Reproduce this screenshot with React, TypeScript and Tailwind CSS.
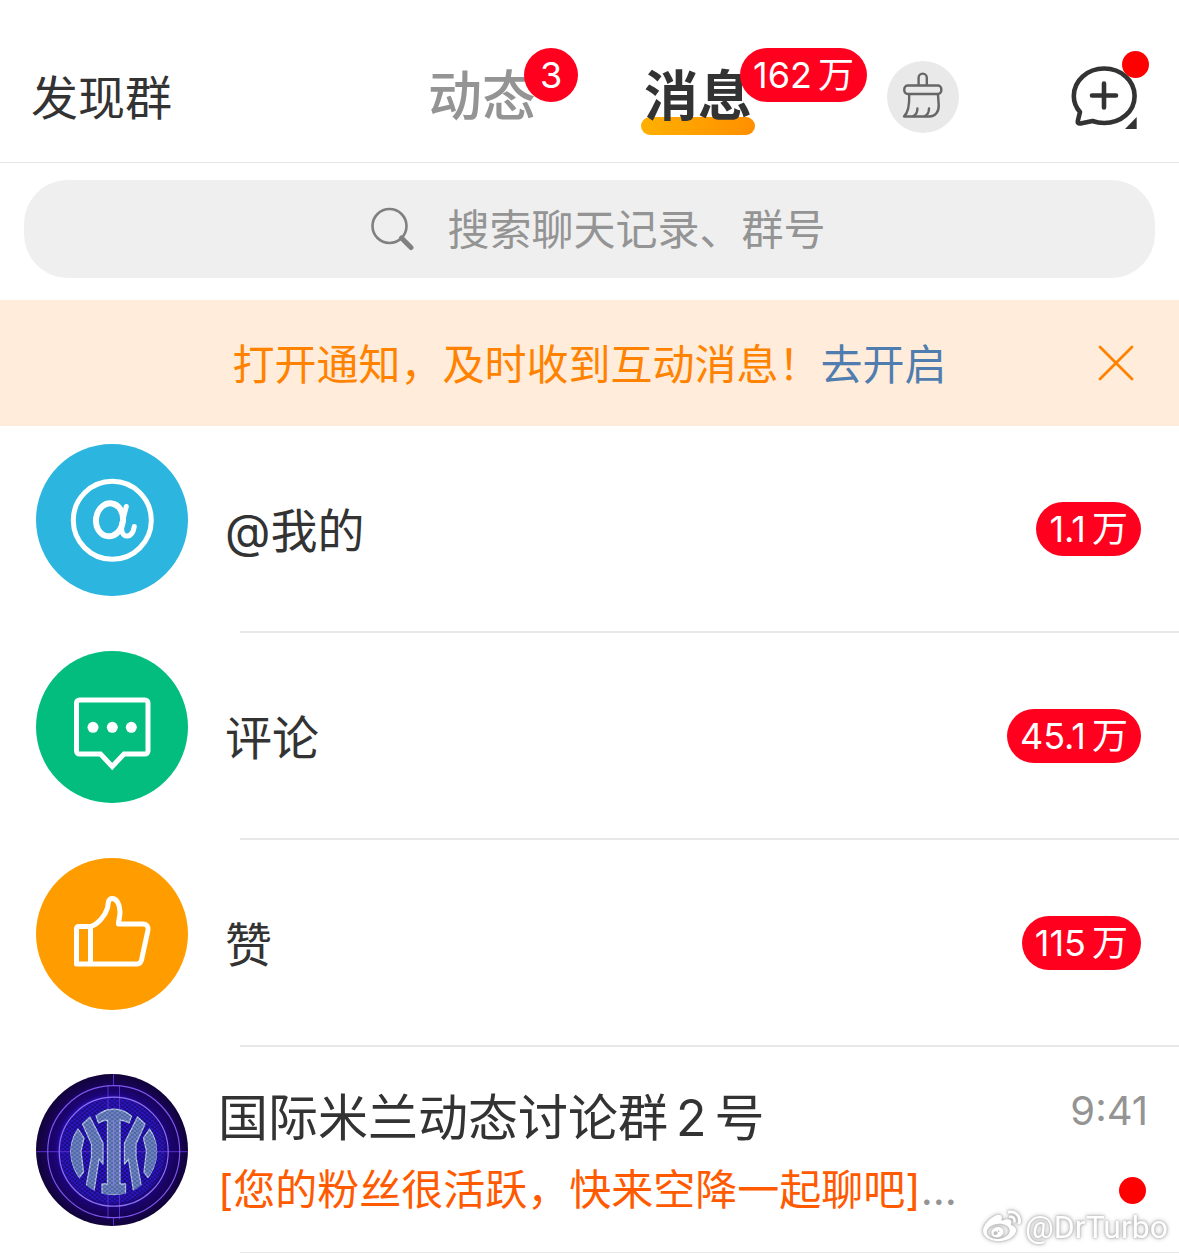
import { ReactNode, useState } from 'react'
import { FaWeibo } from 'react-icons/fa'

type Category = { id: string; label: string; count: string; icon: ReactNode }

const BrushIcon = () => (
  <svg viewBox="0 0 72 72" className="size-full" fill="none" stroke="#666" strokeWidth="2.4" strokeLinecap="round" strokeLinejoin="round">
    <path d="M31.600 23.500V16.700a4 4 0 0 1 8.200 0v6.800" />
    <rect x="17.300" y="24.500" width="37" height="8.500" rx="3.500" />
    <path d="M22.200 33.500C22.500 43 22 51 17 55.500H42C49 55.500 52 50 51.700 44L51 33.500" />
    <path d="M30.400 47.500c0 3-1.200 6-4 7.600M42 47.500c0 3-1.200 6-4 7.600" />
  </svg>
)

const NewChatIcon = () => (
  <svg viewBox="0 0 68 64" className="w-[68px] h-16" fill="none" stroke="#333" strokeWidth="4.6" strokeLinecap="round" strokeLinejoin="round">
    <path d="M10 47C6 42.500 3.800 37 3.800 31C3.800 15.500 17.400 3.500 34.200 3.500S64.600 15.500 64.600 31S51 58 34.200 58C30 58 26 57.300 22.500 56L10.500 58.500C8.200 58.800 7.400 57.700 7.800 56Z" />
    <path d="M34 18.500V42.500M22 30.500H46" />
    <path d="M66.700 52V64H55Z" fill="#333" stroke="none" />
  </svg>
)

const SearchIcon = () => (
  <svg viewBox="0 0 44 44" className="size-11" fill="none" stroke="#808080" strokeLinecap="round">
    <circle cx="19.500" cy="19" r="17" strokeWidth="2.600" />
    <path d="M31.500 31L41 40.500" strokeWidth="5" />
  </svg>
)

const AtIcon = () => (
  <svg viewBox="0 0 152 152" className="size-full" fill="none" stroke="#fff" strokeWidth="5" strokeLinecap="round">
    <circle cx="76.300" cy="76.300" r="39" />
    <ellipse cx="73.500" cy="75.800" rx="13.500" ry="16.500" strokeWidth="6" transform="rotate(8 73.500 75.800)" />
    <path d="M90.300 62.500L86 79C84.500 88 87 92.500 91.500 92C95.500 91.500 97.500 87.500 98.300 82.500" />
  </svg>
)

const CommentIcon = () => (
  <svg viewBox="0 0 152 152" className="size-full" fill="none" stroke="#fff" strokeWidth="5">
    <path d="M43.500 49H109a3 3 0 0 1 3 3V100a3 3 0 0 1-3 3H88L76.200 115.500L64.500 103H43.500a3 3 0 0 1-3-3V52a3 3 0 0 1 3-3Z" />
    <g fill="#fff" stroke="none">
      <circle cx="57" cy="76.300" r="5.500" />
      <circle cx="76.300" cy="76.300" r="5.500" />
      <circle cx="95.300" cy="76.300" r="5.500" />
    </g>
  </svg>
)

const LikeIcon = () => (
  <svg viewBox="0 0 152 152" className="size-full" fill="none" stroke="#fff" strokeWidth="5" strokeLinejoin="round">
    <path d="M40.500 106V70.500a2 2 0 0 1 2-2H55C62 66 69 58 71.500 50C72.200 46 72 40.500 76 40.500C81 40.500 84 47 84 54C84 59 82.500 62 82.500 66H107C111 66 112.500 69 112 72L105.500 102C104.800 104.800 103.500 106 101 106Z" />
    <path d="M54.500 69V106" />
  </svg>
)

const GroupCrest = () => (
  <svg viewBox="0 0 152 152" className="size-full">
    <defs>
      <radialGradient id="crestBg">
        <stop offset="0" stopColor="#2f14d0" />
        <stop offset="0.68" stopColor="#2c12b8" />
        <stop offset="0.74" stopColor="#1c0478" />
        <stop offset="1" stopColor="#120338" />
      </radialGradient>
      <pattern id="weave" width="5" height="4" patternUnits="userSpaceOnUse">
        <path d="M0 1H3M2.500 3H5M1 0V2M4 2V4" stroke="#0f0a5c" strokeWidth="0.700" />
      </pattern>
      <clipPath id="disc">
        <circle cx="77.700" cy="77.700" r="43.500" />
      </clipPath>
    </defs>
    <rect width="152" height="152" fill="url(#crestBg)" />
    <circle cx="77.700" cy="77.700" r="54" fill="url(#weave)" />
    <g fill="none" stroke="#5a2dd0" strokeWidth="1">
      <path d="M0 77.700H152M72 11V145M83.500 11V145M77.500 0V12M77.500 143V152" />
    </g>
    <circle cx="77.700" cy="77.700" r="66" fill="none" stroke="#7d55ec" strokeWidth="1.200" />
    <circle cx="77.700" cy="77.700" r="54.500" fill="none" stroke="#8f70f0" strokeWidth="1.200" />
    <g clipPath="url(#disc)" fill="#6a82bd" stroke="#b5cbe6" strokeWidth="1.300" strokeLinejoin="round">
      <path d="M60 42Q77.700 28 95.500 42L93 49Q88 46 84 46V110H89.500V121H66V110H71.500V46Q67 46 62.500 49Z" />
      <path d="M46.500 50L54 43L67 69V90L63 85L58 117L50 113L55.500 83V70Z" />
      <path d="M109 50L101.500 43L88.500 69V90L92.500 85L97.500 117L105.500 113L100 83V70Z" />
      <path d="M42 55L48 64L45 77L47.500 98L43 104Q26 78 42 55Z" />
      <path d="M113.500 55L107.500 64L110.500 77L108 98L112.500 104Q130 78 113.500 55Z" />
    </g>
    <g clipPath="url(#disc)">
      <rect x="32" y="32" width="92" height="92" fill="url(#weave)" opacity="0.400" />
    </g>
    <path d="M77.700 46V112" stroke="#8a80dd" strokeWidth="1" />
  </svg>
)

const categories: Category[] = [
  { id: 'at', label: '@我的', count: '1.1', icon: <div className="size-full bg-[#2cb6df]"><AtIcon /></div> },
  { id: 'comment', label: '评论', count: '45.1', icon: <div className="size-full bg-[#02bd7d]"><CommentIcon /></div> },
  { id: 'like', label: '赞', count: '115', icon: <div className="size-full bg-[#ff9d00]"><LikeIcon /></div> }
]

const notice = '打开通知\uff0c及时收到互动消息\uff01'
const preview = '[您的粉丝很活跃\uff0c快来空降一起聊吧]'

const CountBadge = ({ count, unit, className = '' }: { count: string; unit?: string; className?: string }) => (
  <span className={`flex justify-center items-center gap-[6px] bg-[#ff001e] px-[13px] rounded-full min-w-[54px] h-[54px] font-normal text-[36px] text-white leading-none whitespace-nowrap ${className}`}>
    <span>{count}</span>
    {unit && <span>{unit}</span>}
  </span>
)

const Avatar = ({ children }: { children: ReactNode }) => (
  <div className="rounded-full size-[152px] overflow-hidden shrink-0">{children}</div>
)

const Divider = () => <div className="bg-[#e8e8e8] ml-60 h-[2px]" />

export default function App() {
  const [tab, setTab] = useState<'feed' | 'messages'>('messages')
  const [noticeOpen, setNoticeOpen] = useState(true)
  const [query, setQuery] = useState('')

  return (
    <main className="relative bg-white min-h-screen overflow-hidden font-['Inter','Noto_Sans_CJK_SC',sans-serif] text-[#333]">
      <header className="flex items-center pt-8 pr-[41px] pl-[31px] border-[#e6e6e6] border-b h-[163px]">
        <button className="text-[47px] leading-none">发现群</button>
        <nav className="flex items-center ml-auto">
          <button onClick={() => setTab('feed')} className={`relative mr-[108px] text-[54px] leading-none ${tab === 'feed' ? 'font-bold text-[#333]' : 'font-medium text-[#949494]'}`}>
            动态
            <CountBadge count="3" className="-top-[22px] left-[96px] absolute" />
          </button>
          <button onClick={() => setTab('messages')} className={`relative mr-[135px] text-[54px] leading-none ${tab === 'messages' ? 'font-bold text-[#333]' : 'font-medium text-[#949494]'}`}>
            <span className="-right-[3px] -bottom-[11px] -left-[3px] absolute bg-linear-to-r from-[#ffb000] to-[#ff8f00] rounded-full h-[18px]" />
            <span className="relative">消息</span>
            <CountBadge count="162" unit="万" className="-top-[22px] left-[96px] absolute" />
          </button>
          <button aria-label="清除未读" className="bg-[#e9e9e9] rounded-full size-[72px]">
            <BrushIcon />
          </button>
        </nav>
        <button aria-label="发起聊天" className="relative ml-[111px]">
          <NewChatIcon />
          <span className="-top-[14px] -right-[11px] absolute bg-[#ff0000] rounded-full size-[27px]" />
        </button>
      </header>

      <label className="flex justify-center items-center gap-[34px] bg-[#efefef] mx-6 mt-[17px] pl-[18px] rounded-[44px] h-[98px]">
        <SearchIcon />
        <input
          type="text"
          aria-label="搜索聊天记录、群号"
          value={query}
          onChange={(e) => setQuery(e.target.value)}
          placeholder="搜索聊天记录、群号"
          className="bg-transparent outline-none w-[380px] text-[42px] placeholder:text-[#949494]"
        />
      </label>

      {noticeOpen && (
        <div className="items-center grid grid-cols-[1fr_auto_1fr] bg-[#ffecda] mt-[22px] h-[126px] text-[#ff8200] text-[42px] leading-none">
          <p className="col-start-2 pt-1">
            {notice}
            <a href="#settings" className="text-[#507daf]">去开启</a>
          </p>
          <button aria-label="关闭" onClick={() => setNoticeOpen(false)} className="justify-self-end mr-[45px]">
            <svg viewBox="0 0 36 36" className="size-9" stroke="#ff8200" strokeWidth="2.800" strokeLinecap="round">
              <path d="M2 2L34 34M34 2L2 34" />
            </svg>
          </button>
        </div>
      )}

      <ul>
        {categories.map((c) => (
          <li key={c.id}>
            <a href={`#${c.id}`} className="flex items-center pr-[38px] pl-9">
              <div className="pt-[18px] pb-[35px]">
                <Avatar>{c.icon}</Avatar>
              </div>
              <span className="pt-1 ml-[37px] text-[47px] leading-none">{c.label}</span>
              <CountBadge count={c.count} unit="万" className="ml-auto" />
            </a>
            <Divider />
          </li>
        ))}
        <li>
          <a href="#group" className="flex items-start pt-[27px] pr-[31px] pb-[26px] pl-9">
            <Avatar>
              <GroupCrest />
            </Avatar>
            <div className="flex-1 mt-2 ml-[30px] min-w-0">
              <div className="flex justify-between items-start h-[72px]">
                <h2 className="text-[50px] truncate leading-[72px]">
                  国际米兰动态讨论群<span className="mx-2">2</span>号
                </h2>
                <time className="text-[#949494] text-[40px] leading-[58px]">9:41</time>
              </div>
              <div className="flex justify-between items-center h-[72px]">
                <p className="text-[#949494] text-[42px] truncate leading-[72px]">
                  <span className="text-[#ff5a00]">{preview}</span>...
                </p>
                <span className="bg-[#ff0000] mr-[2px] rounded-full size-[27px] shrink-0" />
              </div>
            </div>
          </a>
          <Divider />
        </li>
      </ul>

      <div className="right-[11px] bottom-2 absolute flex items-center gap-1 font-['Roboto',sans-serif] text-[32px] text-white leading-9 [filter:drop-shadow(0_0_1px_#aaa)_drop-shadow(0_0_2px_#bbb)]">
        <FaWeibo className="size-[38px]" />
        @DrTurbo
      </div>
    </main>
  )
}
